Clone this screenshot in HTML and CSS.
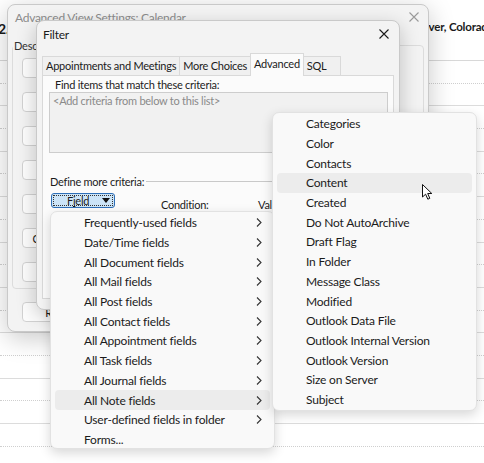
FILE: index.html
```html
<!DOCTYPE html>
<html lang="en">
<head>
    <meta charset="UTF-8">
    <title>Filter - Advanced</title>
    <link rel="stylesheet" href="styles.css">
</head>
<body>
    <div class="desk">
        <!-- calendar page behind the dialogs -->
        <div class="page">
            <div class="page-head">
                <span class="head-left">2.</span>
                <span class="head-right">Denver, Colorado</span>
            </div>
            <div class="page-rows">
                <div class="page-row"></div><div class="page-row"></div><div class="page-row"></div>
                <div class="page-row"></div><div class="page-row"></div><div class="page-row"></div>
                <div class="page-row"></div><div class="page-row"></div><div class="page-row"></div>
                <div class="page-row"></div><div class="page-row"></div><div class="page-row"></div>
                <div class="page-row"></div><div class="page-row"></div><div class="page-row"></div>
                <div class="page-row"></div><div class="page-row"></div>
            </div>
        </div>

        <!-- Advanced View Settings -->
        <div class="win win-view">
            <div class="win-title">
                <span>Advanced View Settings: Calendar</span>
                <svg class="win-close" width="10" height="10" viewBox="0 0 10 10"><path d="M0.5 0.5L9.5 9.5M9.5 0.5L0.5 9.5"/></svg>
            </div>
            <fieldset class="group">
                <legend>Description</legend>
                <div class="view-buttons">
                    <button class="btn">Columns...</button>
                    <button class="btn">Group By...</button>
                    <button class="btn">Sort...</button>
                    <button class="btn">Filter...</button>
                    <button class="btn">Other Settings...</button>
                    <button class="btn">Conditional Formatting...</button>
                    <button class="btn">Format Columns...</button>
                </div>
            </fieldset>
            <button class="btn btn-reset">Reset Current View</button>
        </div>

        <!-- Filter -->
        <div class="win win-filter">
            <div class="win-title">
                <span>Filter</span>
                <svg class="win-close" width="10" height="10" viewBox="0 0 10 10"><path d="M0.5 0.5L9.5 9.5M9.5 0.5L0.5 9.5"/></svg>
            </div>
            <div class="tabs">
                <div class="tab">Appointments and Meetings</div>
                <div class="tab">More Choices</div>
                <div class="tab active">Advanced</div>
                <div class="tab">SQL</div>
            </div>
            <div class="tab-panel">
                <div class="panel-label">Find items that match these criteria:</div>
                <div class="criteria-list">&lt;Add criteria from below to this list&gt;</div>
                <div class="define-row">Define more criteria:</div>
                <div class="field-row">
                    <div class="field-btn">
                        <span class="field-inner"><span>F<u>i</u>eld</span><span class="drop-arrow"></span></span>
                    </div>
                    <span class="field-label">Condition:</span>
                    <span class="field-label">Value:</span>
                </div>
            </div>
        </div>

        <!-- field menu -->
        <div class="menu menu-fields">
            <div class="menu-item">Frequently-used fields <svg class="chev" width="6" height="9" viewBox="0 0 6 9"><path d="M1 0.5L5 4.5L1 8.5"/></svg></div>
            <div class="menu-item">Date/Time fields <svg class="chev" width="6" height="9" viewBox="0 0 6 9"><path d="M1 0.5L5 4.5L1 8.5"/></svg></div>
            <div class="menu-item">All Document fields <svg class="chev" width="6" height="9" viewBox="0 0 6 9"><path d="M1 0.5L5 4.5L1 8.5"/></svg></div>
            <div class="menu-item">All Mail fields <svg class="chev" width="6" height="9" viewBox="0 0 6 9"><path d="M1 0.5L5 4.5L1 8.5"/></svg></div>
            <div class="menu-item">All Post fields <svg class="chev" width="6" height="9" viewBox="0 0 6 9"><path d="M1 0.5L5 4.5L1 8.5"/></svg></div>
            <div class="menu-item">All Contact fields <svg class="chev" width="6" height="9" viewBox="0 0 6 9"><path d="M1 0.5L5 4.5L1 8.5"/></svg></div>
            <div class="menu-item">All Appointment fields <svg class="chev" width="6" height="9" viewBox="0 0 6 9"><path d="M1 0.5L5 4.5L1 8.5"/></svg></div>
            <div class="menu-item">All Task fields <svg class="chev" width="6" height="9" viewBox="0 0 6 9"><path d="M1 0.5L5 4.5L1 8.5"/></svg></div>
            <div class="menu-item">All Journal fields <svg class="chev" width="6" height="9" viewBox="0 0 6 9"><path d="M1 0.5L5 4.5L1 8.5"/></svg></div>
            <div class="menu-item hover">All Note fields <svg class="chev" width="6" height="9" viewBox="0 0 6 9"><path d="M1 0.5L5 4.5L1 8.5"/></svg></div>
            <div class="menu-item">User-defined fields in folder <svg class="chev" width="6" height="9" viewBox="0 0 6 9"><path d="M1 0.5L5 4.5L1 8.5"/></svg></div>
            <div class="menu-item">Forms...</div>
        </div>

        <!-- note fields submenu -->
        <div class="menu menu-notes">
            <div class="menu-item">Categories</div>
            <div class="menu-item">Color</div>
            <div class="menu-item">Contacts</div>
            <div class="menu-item hover">Content</div>
            <div class="menu-item">Created</div>
            <div class="menu-item">Do Not AutoArchive</div>
            <div class="menu-item">Draft Flag</div>
            <div class="menu-item">In Folder</div>
            <div class="menu-item">Message Class</div>
            <div class="menu-item">Modified</div>
            <div class="menu-item">Outlook Data File</div>
            <div class="menu-item">Outlook Internal Version</div>
            <div class="menu-item">Outlook Version</div>
            <div class="menu-item">Size on Server</div>
            <div class="menu-item">Subject</div>
        </div>

        <svg class="cursor" width="12" height="17" viewBox="0 0 12 17"><path d="M0.5 0.5L0.5 13L3.6 10.2L5.8 15.2L7.8 14.3L5.7 9.5L9.8 9.5Z"/></svg>
    </div>
</body>
</html>
```

FILE: styles.css
```css
body {
    margin: 0;
    font-family: Lato, "Noto Sans", sans-serif;
    font-size: 12px;
    letter-spacing: -0.2px;
    color: #1b1b1b;
}

.desk {
    position: relative;
    width: 484px;
    height: 463px;
    overflow: hidden;
    background: #fff;
}

/* page behind */
.page-head {
    display: grid;
    grid-template-columns: 408px auto;
    height: 61px;
    box-sizing: border-box;
    padding-top: 20px;
    border-bottom: 1px solid #d8d8d8;
    font-weight: bold;
    font-size: 11.5px;
    white-space: nowrap;
}

.head-left {
    margin-left: -2px;
    font-size: 14px;
}

.page-row {
    height: 22.7px;
    box-sizing: border-box;
    border-bottom: 1px dotted #cfcfcf;
}

.page-row:nth-child(even) {
    border-bottom: 1px solid #dcdcdc;
}

/* windows */
.win {
    position: absolute;
    box-sizing: border-box;
    border: 1px solid #c9c9c9;
    border-radius: 8px;
    background: #f3f3f3;
}

.win-title {
    display: flex;
    align-items: center;
    justify-content: space-between;
    letter-spacing: -0.28px;
}

.win-close path {
    stroke: #1b1b1b;
    stroke-width: 1.1;
    fill: none;
}

.win-view {
    left: 7px;
    top: 4px;
    width: 422px;
    height: 328px;
    padding: 0 4px 8px;
    box-shadow: 0 6px 26px rgba(0,0,0,0.22);
}

.win-view .win-title {
    height: 24px;
    padding: 0 5px 0 3px;
    color: #8c8c8c;
}

.win-view .win-close path {
    stroke: #9a9a9a;
}

.group {
    margin: 10px 0 0;
    padding: 6px 0 6px 0;
    border: 1px solid #dcdcdc;
    border-radius: 4px;
}

.group legend {
    padding: 0 1px;
    font-size: 11px;
    color: #333;
}

.view-buttons {
    display: flex;
    flex-direction: column;
    gap: 14px;
    padding-left: 9px;
}

.btn {
    width: 140px;
    height: 20px;
    box-sizing: border-box;
    padding: 0;
    border: 1px solid #d2d2d2;
    border-radius: 4px;
    background: #fdfdfd;
    font: inherit;
    font-size: 11px;
    color: #1b1b1b;
    text-align: center;
    white-space: nowrap;
    overflow: hidden;
}

.btn-reset {
    margin: 13px 0 0 10px;
}

.win-filter {
    left: 36px;
    top: 20px;
    width: 364px;
    height: 290px;
    padding: 0 5px 10px;
    box-shadow: 0 6px 20px rgba(0,0,0,0.22);
}

.win-filter .win-title {
    height: 26px;
    padding: 0 5px 0 1px;
}

.tabs {
    display: flex;
    align-items: flex-end;
    height: 22px;
    margin-top: 6px;
    font-size: 11px;
    letter-spacing: -0.25px;
}

.tab {
    height: 19px;
    min-width: 38px;
    box-sizing: border-box;
    padding: 0 3px;
    line-height: 18px;
    border: 1px solid #d9d9d9;
    border-bottom: none;
    margin-right: -1px;
    background: #f0f0f0;
    white-space: nowrap;
}

.tab.active {
    position: relative;
    z-index: 1;
    height: 23px;
    margin-bottom: -1px;
    line-height: 20px;
    background: #fbfbfb;
}

.tab-panel {
    height: 224px;
    box-sizing: border-box;
    padding: 2px 5px 0 6px;
    border: 1px solid #d9d9d9;
    background: #fbfbfb;
    font-size: 11px;
    letter-spacing: -0.25px;
}

.panel-label {
    height: 14px;
    line-height: 14px;
    margin-left: 6px;
}

.criteria-list {
    height: 61px;
    box-sizing: border-box;
    padding: 1px 3px;
    line-height: 14px;
    border: 1px solid #cdcdcd;
    background: #f1f1f1;
    color: #8a8a8a;
}

.define-row {
    display: flex;
    align-items: center;
    gap: 2px;
    height: 14px;
    margin-top: 21px;
    padding-left: 1px;
}

.define-row::after {
    content: "";
    flex: 1;
    border-top: 1px solid #c9c9c9;
}

.field-row {
    display: grid;
    grid-template-columns: 110px 97px auto;
    align-items: start;
    margin-top: 5px;
    padding-left: 2px;
}

.field-btn {
    width: 64px;
    height: 15px;
    box-sizing: border-box;
    padding: 1px;
    border: 1px solid #2f6fb7;
    border-radius: 3px;
    background: #cce4f7;
}

.field-inner {
    display: flex;
    align-items: center;
    justify-content: space-between;
    height: 100%;
    box-sizing: border-box;
    padding: 0 2px 0 13px;
    border: 1px dotted #333;
    line-height: 10px;
}

.drop-arrow {
    width: 0;
    height: 0;
    border-left: 4px solid transparent;
    border-right: 4px solid transparent;
    border-top: 5px solid #111;
}

.field-label {
    margin-top: 5px;
    line-height: 14px;
}

/* popup menus */
.menu {
    position: absolute;
    box-sizing: border-box;
    padding: 1px 0;
    border: 1px solid #e2e2e2;
    border-radius: 7px;
    background: #f9f9f9;
    box-shadow: 0 4px 12px rgba(0,0,0,0.16);
}

.menu-fields {
    left: 50px;
    top: 211px;
    width: 225px;
    height: 238px;
}

.menu-notes {
    left: 272px;
    top: 112px;
    width: 205px;
    height: 299px;
}

.menu-item {
    display: flex;
    align-items: center;
    justify-content: space-between;
    height: 19.7px;
    margin: 0 4px;
    padding: 0 8px 0 29px;
    border-radius: 4px;
    white-space: nowrap;
}

.menu-item.hover {
    background: #ececec;
}

.chev path {
    fill: none;
    stroke: #333;
    stroke-width: 1.1;
}

.cursor {
    position: absolute;
    left: 422px;
    top: 184px;
}

.cursor path {
    fill: #fff;
    stroke: #111;
    stroke-width: 1;
    stroke-linejoin: round;
}
```
